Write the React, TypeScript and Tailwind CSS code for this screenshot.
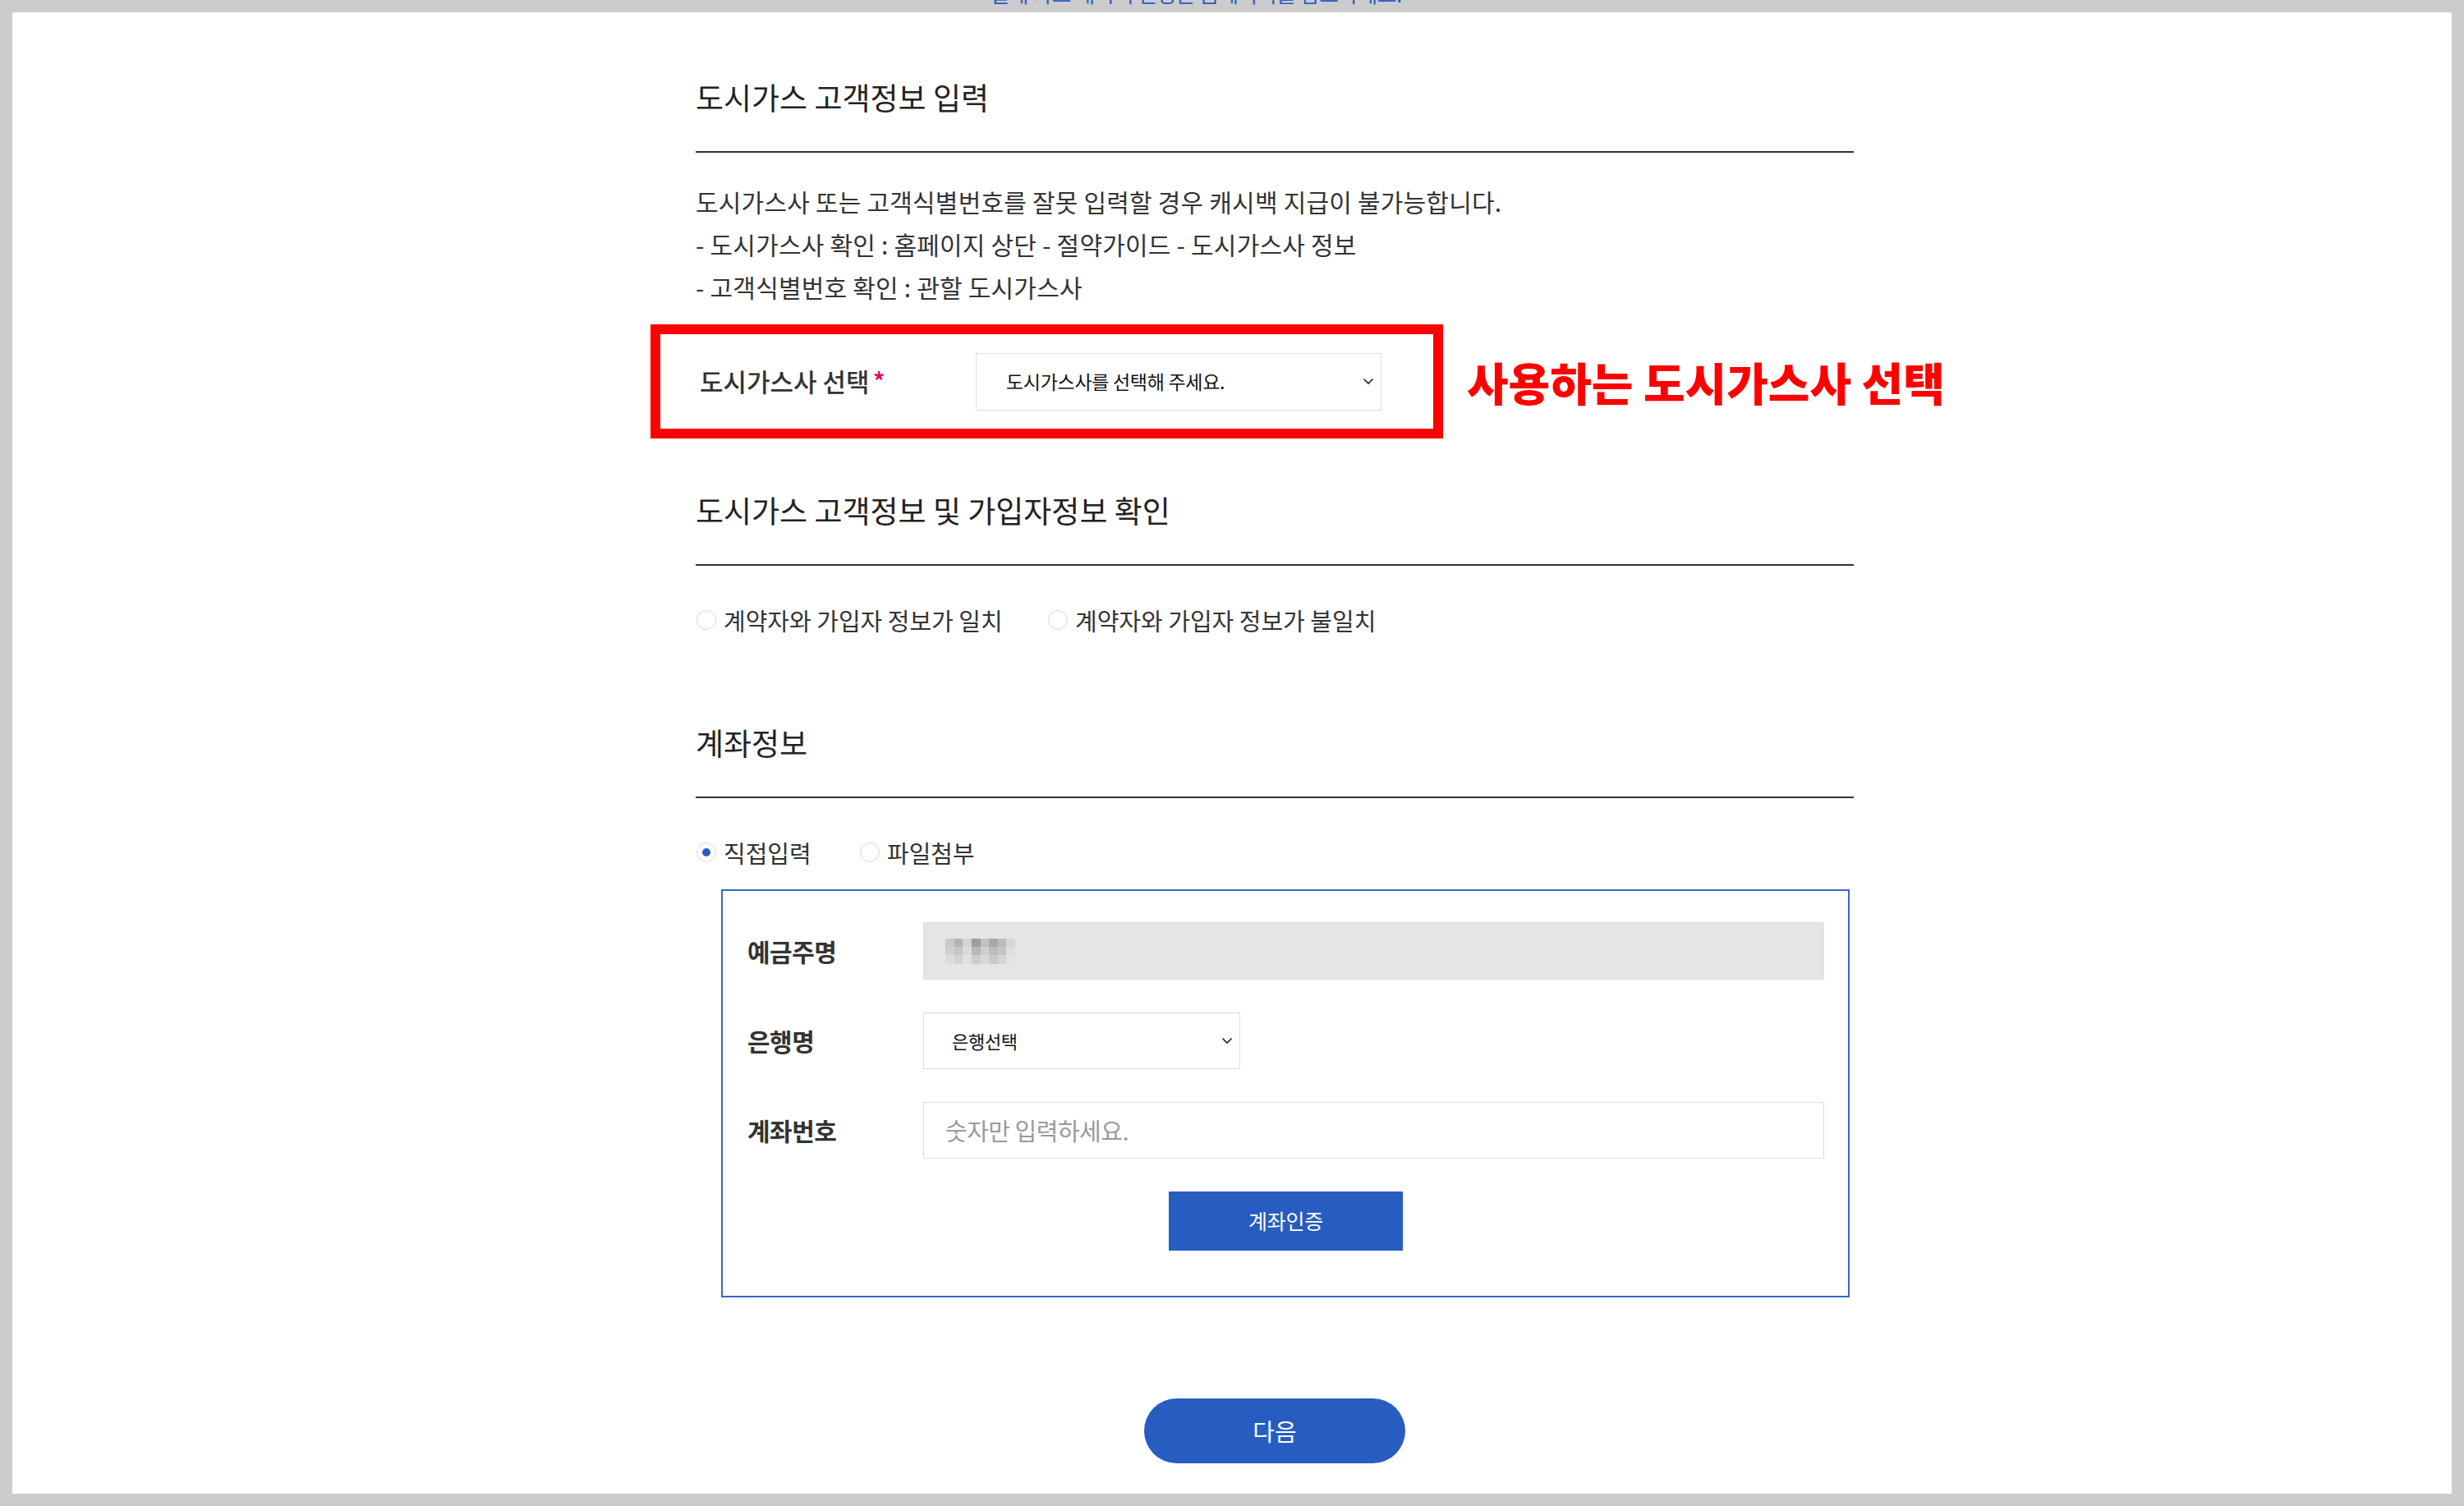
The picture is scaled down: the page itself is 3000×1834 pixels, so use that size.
import React from "react";

// ============================================
// SMALL PIECES
// ============================================

function Chevron() {
  return (
    <svg width="14" height="9" viewBox="0 0 14 9" fill="none" className="flex-shrink-0">
      <path d="M1.5 1.5 L7 7 L12.5 1.5" stroke="#222" strokeWidth="1.6" />
    </svg>
  );
}

function Radio({ checked, label, className }: { checked?: boolean; label: string; className?: string }) {
  return (
    <label className={"flex items-center gap-[9px] " + (className ?? "")}>
      <span className="w-[24px] h-[24px] rounded-full border border-[#d9d9d9] bg-white flex items-center justify-center flex-shrink-0">
        {checked && <span className="w-[10px] h-[10px] rounded-full bg-[#2a5dc1]" />}
      </span>
      <span className="text-[29px] leading-[40px] tracking-[0px] text-[#333] whitespace-nowrap">{label}</span>
    </label>
  );
}

function SectionTitle({ children }: { children: React.ReactNode }) {
  return (
    <h2 className="border-b-2 border-[#333] pb-[40px] text-[37px] leading-[51px] text-[#222]">
      {children}
    </h2>
  );
}

// pixelated (blurred) account holder name
const blurShades = [
  "#c9c9c9", "#b4b4b4", "#d4d4d4", "#9e9e9e", "#c2c2c2", "#a8a8a8", "#bdbdbd", "#d6d6d6",
  "#d0d0d0", "#c6c6c6", "#dadada", "#b8b8b8", "#cfcfcf", "#bcbcbc", "#c4c4c4", "#dedede",
  "#dcdcdc", "#d2d2d2", "#e0e0e0", "#cdcdcd", "#d8d8d8", "#cacaca", "#d5d5d5", "#e2e2e2",
];

// ============================================
// PAGE
// ============================================

export default function App() {
  return (
    <div className="h-[1834px] w-full bg-[#cccccc] px-[15px] pb-[15px] font-['Noto_Sans_CJK_KR','Noto_Sans',sans-serif]">
      {/* cut-off text above the panel */}
      <div className="h-[15px] overflow-hidden pl-[1190px]">
        <p className="-mt-[21px] text-[26px] leading-[26px] tracking-[-0.5px] text-[#2a5dc1] whitespace-nowrap">
          절세 가스 캐시백 신청은 홈페이지를 참고하세요.
        </p>
      </div>

      <div className="h-[1804px] bg-white pl-[832px]">
        <div className="w-[1410px] pt-[78px] flex flex-col">
          {/* Section 1 */}
          <SectionTitle>도시가스 고객정보 입력</SectionTitle>

          <div className="mt-[33px] text-[30px] leading-[52px] tracking-[0.2px] text-[#333]">
            <p>도시가스사 또는 고객식별번호를 잘못 입력할 경우 캐시백 지급이 불가능합니다.</p>
            <p>- 도시가스사 확인 : 홈페이지 상단 - 절약가이드 - 도시가스사 정보</p>
            <p>- 고객식별번호 확인 : 관할 도시가스사</p>
          </div>

          <div className="mt-[20px] -ml-[55px] flex items-center">
            <div className="w-[965px] h-[139px] flex-shrink-0 border-[12px] border-[#ff0000] flex items-center pl-[48px]">
              <span className="w-[336px] text-[31px] font-medium text-[#333] whitespace-nowrap">
                도시가스사 선택<span className="ml-[4px] text-[#e5005a]">*</span>
              </span>
              <div className="w-[494px] h-[70px] border border-[#dddddd] flex items-center justify-between pl-[36px] pr-[8px]">
                <span className="text-[23px] tracking-[-0.3px] text-[#111]">도시가스사를 선택해 주세요.</span>
                <Chevron />
              </div>
            </div>
            <span className="ml-[29px] text-[55px] leading-none font-black text-[#ff0000] whitespace-nowrap">
              사용하는 도시가스사 선택
            </span>
          </div>

          {/* Section 2 */}
          <div className="mt-[62px]">
            <SectionTitle>도시가스 고객정보 및 가입자정보 확인</SectionTitle>
          </div>
          <div className="mt-[46px] h-[40px] flex items-center pl-[1px]">
            <Radio label="계약자와 가입자 정보가 일치" className="w-[428px]" />
            <Radio label="계약자와 가입자 정보가 불일치" />
          </div>

          {/* Section 3 */}
          <div className="mt-[104px]">
            <SectionTitle>계좌정보</SectionTitle>
          </div>
          <div className="mt-[46px] h-[40px] flex items-center pl-[1px]">
            <Radio checked label="직접입력" className="w-[199px]" />
            <Radio label="파일첨부" />
          </div>

          <div className="mt-[25px] ml-[31px] w-[1374px] h-[497px] border-2 border-[#3566cc] pt-[38px] pl-[30px] pr-[29px] flex flex-col gap-[40px]">
            <div className="flex items-center h-[70px]">
              <span className="w-[214px] text-[30px] font-bold tracking-[-0.5px] text-[#333]">예금주명</span>
              <div className="flex-1 h-[70px] bg-[#e5e5e5] border border-[#e0e0e0] flex items-center pl-[26px]">
                <div className="grid grid-cols-8 w-[85px] h-[31px]">
                  {blurShades.map((c, i) => (
                    <span key={i} style={{ backgroundColor: c }} />
                  ))}
                </div>
              </div>
            </div>

            <div className="flex items-center h-[69px]">
              <span className="w-[214px] text-[30px] font-bold tracking-[-0.5px] text-[#333]">은행명</span>
              <div className="w-[386px] h-[69px] border border-[#dddddd] flex items-center justify-between pl-[34px] pr-[8px]">
                <span className="text-[22px] tracking-[-0.3px] text-[#111]">은행선택</span>
                <Chevron />
              </div>
            </div>

            <div className="flex items-center h-[69px]">
              <span className="w-[214px] text-[30px] font-bold tracking-[-0.5px] text-[#333]">계좌번호</span>
              <div className="flex-1 h-[69px] border border-[#dddddd] flex items-center pl-[26px]">
                <span className="text-[29px] tracking-[-0.5px] text-[#9a9a9a]">숫자만 입력하세요.</span>
              </div>
            </div>

            <div className="flex justify-center">
              <button className="w-[285px] h-[72px] bg-[#275dc0] text-white text-[25px] tracking-[-0.3px]">
                계좌인증
              </button>
            </div>
          </div>

          <div className="mt-[123px] flex justify-center">
            <button className="w-[318px] h-[79px] rounded-full bg-[#275dc0] text-white text-[29px]">
              다음
            </button>
          </div>
        </div>
      </div>
    </div>
  );
}
